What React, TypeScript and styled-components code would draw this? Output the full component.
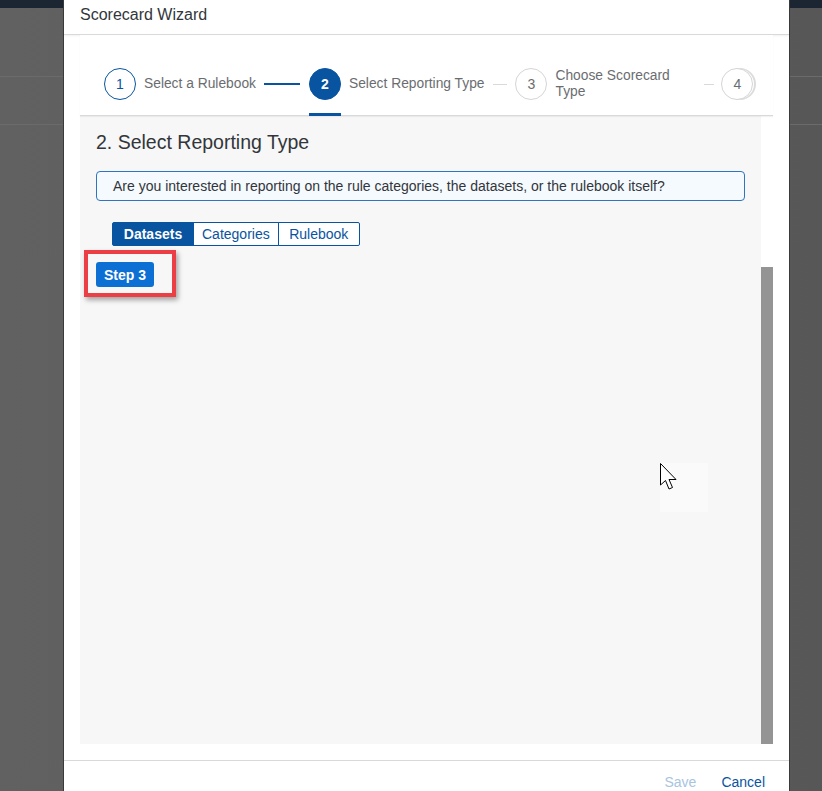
import styled, { createGlobalStyle, css } from "styled-components"

const GlobalStyle = createGlobalStyle`
  html, body {
    margin: 0;
    padding: 0;
    overflow: hidden;
  }
  body {
    font-family: "Liberation Sans", Arial, sans-serif;
    color: #32363a;
  }
`

type StepState = "done" | "active" | "todo"

interface Step {
  num: number
  label?: string
  state: StepState
  labelWidth?: number
  connector?: { width: number; left: number; right: number; active: boolean }
  stacked?: boolean
}

const steps: Step[] = [
  {
    num: 1,
    label: "Select a Rulebook",
    state: "done",
    connector: { width: 36, left: 8, right: 9, active: true },
  },
  {
    num: 2,
    label: "Select Reporting Type",
    state: "active",
    connector: { width: 14, left: 9, right: 8, active: false },
  },
  {
    num: 3,
    label: "Choose Scorecard Type",
    state: "todo",
    labelWidth: 141,
    connector: { width: 10, left: 8, right: 7, active: false },
  },
  { num: 4, state: "todo", stacked: true },
]

const segments = ["Datasets", "Categories", "Rulebook"]

export default function App() {
  return (
    <Page>
      <GlobalStyle />
      <Dialog>
        <Header>Scorecard Wizard</Header>
        <Body>
          <WizardNav>
            {steps.map((step) => (
              <StepItem key={step.num}>
                <StepCircle $state={step.state} $stacked={step.stacked}>
                  {step.num}
                </StepCircle>
                {step.label && (
                  <StepLabel style={step.labelWidth ? { width: step.labelWidth } : undefined}>
                    {step.label}
                  </StepLabel>
                )}
                {step.connector && (
                  <Connector
                    $active={step.connector.active}
                    style={{
                      width: step.connector.width,
                      marginLeft: step.connector.left,
                      marginRight: step.connector.right,
                    }}
                  />
                )}
              </StepItem>
            ))}
          </WizardNav>
          <ContentRow>
            <Content>
              <Title>2. Select Reporting Type</Title>
              <InfoStrip>
                Are you interested in reporting on the rule categories, the datasets, or the
                rulebook itself?
              </InfoStrip>
              <Segmented>
                {segments.map((s, i) => (
                  <SegmentButton key={s} $selected={i === 0}>
                    {s}
                  </SegmentButton>
                ))}
              </Segmented>
              <Highlight>
                <StepBadge>Step 3</StepBadge>
              </Highlight>
              <CursorSpot>
                <svg width="20" height="28" viewBox="0 0 20 28">
                  <path
                    d="M0.5 0.5 L0.5 22 L5.5 17.5 L9 26 L12.5 24.5 L9 16.5 L16 16.5 Z"
                    fill="#fff"
                    stroke="#000"
                    strokeWidth="1"
                    strokeLinejoin="miter"
                  />
                </svg>
              </CursorSpot>
            </Content>
            <ScrollTrack>
              <ScrollThumb />
            </ScrollTrack>
          </ContentRow>
        </Body>
        <Footer>
          <FooterButton $disabled>Save</FooterButton>
          <FooterButton>Cancel</FooterButton>
        </Footer>
      </Dialog>
    </Page>
  )
}

const Page = styled.div`
  height: 100vh;
  background:
    linear-gradient(#1c2632, #1c2632) 0 0 / 100% 8px no-repeat,
    linear-gradient(#6b6b6b, #6b6b6b) 0 76px / 100% 1px no-repeat,
    linear-gradient(#6b6b6b, #6b6b6b) 0 124px / 100% 1px no-repeat,
    linear-gradient(90deg, #616161 0%, #575757 100%);
  display: flex;
  align-items: flex-start;
  overflow: hidden;
`

const Dialog = styled.div`
  margin-left: 64px;
  width: 725px;
  flex-shrink: 0;
  background: #fff;
  display: flex;
  flex-direction: column;
  box-shadow: -1px 0 0 #3a3a3a, 1px 0 0 #3a3a3a;
`

const Header = styled.div`
  flex-shrink: 0;
  height: 35px;
  box-sizing: border-box;
  padding: 0 16px 4px;
  display: flex;
  align-items: center;
  font-size: 16px;
  color: #32363a;
  border-bottom: 1px solid #d9d9d9;
  box-shadow: 0 1px 2px rgba(0, 0, 0, 0.06);
`

const Body = styled.div`
  flex-shrink: 0;
  padding: 0 16px 16px;
  display: flex;
  flex-direction: column;
`

const WizardNav = styled.div`
  flex-shrink: 0;
  height: 81px;
  box-sizing: border-box;
  padding: 33px 0 0 24px;
  display: flex;
  align-items: flex-start;
  background: #fff;
  border-bottom: 1px solid #d9d9d9;
  box-shadow: 0 1px 1px rgba(0, 0, 0, 0.05);
  position: relative;
  z-index: 1;
`

const StepItem = styled.div`
  display: flex;
  align-items: center;
  height: 32px;
`

const StepCircle = styled.div<{ $state: StepState; $stacked?: boolean }>`
  width: 32px;
  height: 32px;
  box-sizing: border-box;
  border-radius: 50%;
  display: flex;
  align-items: center;
  justify-content: center;
  font-size: 14px;
  flex-shrink: 0;
  position: relative;
  background: #fff;
  border: 1px solid #d5d5d5;
  color: #6a6d70;

  ${(p) =>
    p.$state === "done" &&
    css`
      border-color: #0854a0;
      color: #0854a0;
    `}

  ${(p) =>
    p.$state === "active" &&
    css`
      background: #0854a0;
      border-color: #0854a0;
      color: #fff;
      font-weight: 700;

      &::after {
        content: "";
        position: absolute;
        left: -1px;
        right: -1px;
        top: 44px;
        height: 3px;
        background: #0854a0;
      }
    `}

  ${(p) =>
    p.$stacked &&
    css`
      box-shadow: 2px 0 0 -1px #fff, 3px 0 0 0 #dcdcdc;
    `}
`

const StepLabel = styled.div`
  margin-left: 8px;
  font-size: 13.8px;
  line-height: 16px;
  color: #6a6d70;
  white-space: normal;
`

const Connector = styled.div<{ $active: boolean }>`
  height: ${(p) => (p.$active ? "1.5px" : "1px")};
  background: ${(p) => (p.$active ? "#0854a0" : "#d9d9d9")};
  flex-shrink: 0;
`

const ContentRow = styled.div`
  flex-shrink: 0;
  display: flex;
  height: 628px;
`

const Content = styled.div`
  flex: 1;
  background: #f7f7f7;
  padding: 13px 16px 0;
  display: flex;
  flex-direction: column;
  align-items: flex-start;
  position: relative;
`

const Title = styled.h2`
  margin: 0;
  font-size: 19.5px;
  font-weight: 400;
  line-height: 26px;
  color: #32363a;
`

const InfoStrip = styled.div`
  margin-top: 16px;
  align-self: stretch;
  height: 30px;
  box-sizing: border-box;
  padding: 0 16px;
  display: flex;
  align-items: center;
  background: #f5faff;
  border: 1px solid #2f74bd;
  border-radius: 4px;
  font-size: 14px;
  color: #32363a;
`

const Segmented = styled.div`
  margin: 21px 0 0 16px;
  display: flex;
  height: 24px;
`

const SegmentButton = styled.div<{ $selected: boolean }>`
  box-sizing: border-box;
  height: 24px;
  padding: 0 8px;
  display: flex;
  align-items: center;
  justify-content: center;
  font-size: 14px;
  border: 1px solid #0854a0;
  margin-left: -1px;
  color: #0854a0;
  background: #fff;
  min-width: 82px;

  &:first-child {
    margin-left: 0;
    border-radius: 2px 0 0 2px;
  }
  &:last-child {
    border-radius: 0 2px 2px 0;
  }

  ${(p) =>
    p.$selected &&
    css`
      background: #0854a0;
      color: #fff;
      font-weight: 700;
    `}
`

const Highlight = styled.div`
  margin: 4px 0 0 -12px;
  width: 92px;
  height: 47px;
  box-sizing: border-box;
  border: 4px solid #ec3f45;
  padding: 8px;
  box-shadow: 2px 3px 5px rgba(0, 0, 0, 0.35);
`

const StepBadge = styled.div`
  width: 58px;
  height: 25px;
  border-radius: 3px;
  background: #0b6fd3;
  color: #fff;
  font-weight: 700;
  font-size: 14px;
  display: flex;
  align-items: center;
  justify-content: center;
`

const CursorSpot = styled.div`
  position: absolute;
  left: 580px;
  top: 347px;
  width: 48px;
  height: 49px;
  background: #fafafa;

  svg {
    display: block;
  }
`

const ScrollTrack = styled.div`
  width: 12px;
  padding-top: 151px;
  background: #fff;
  display: flex;
  flex-direction: column;
`

const ScrollThumb = styled.div`
  flex: 1;
  background: #949494;
`

const Footer = styled.div`
  flex-shrink: 0;
  height: 42px;
  border-top: 1px solid #d9d9d9;
  display: flex;
  align-items: center;
  justify-content: flex-end;
  gap: 25px;
  padding: 0 24px 0 0;
`

const FooterButton = styled.div<{ $disabled?: boolean }>`
  font-size: 14px;
  color: ${(p) => (p.$disabled ? "#a9c4df" : "#0854a0")};
`
